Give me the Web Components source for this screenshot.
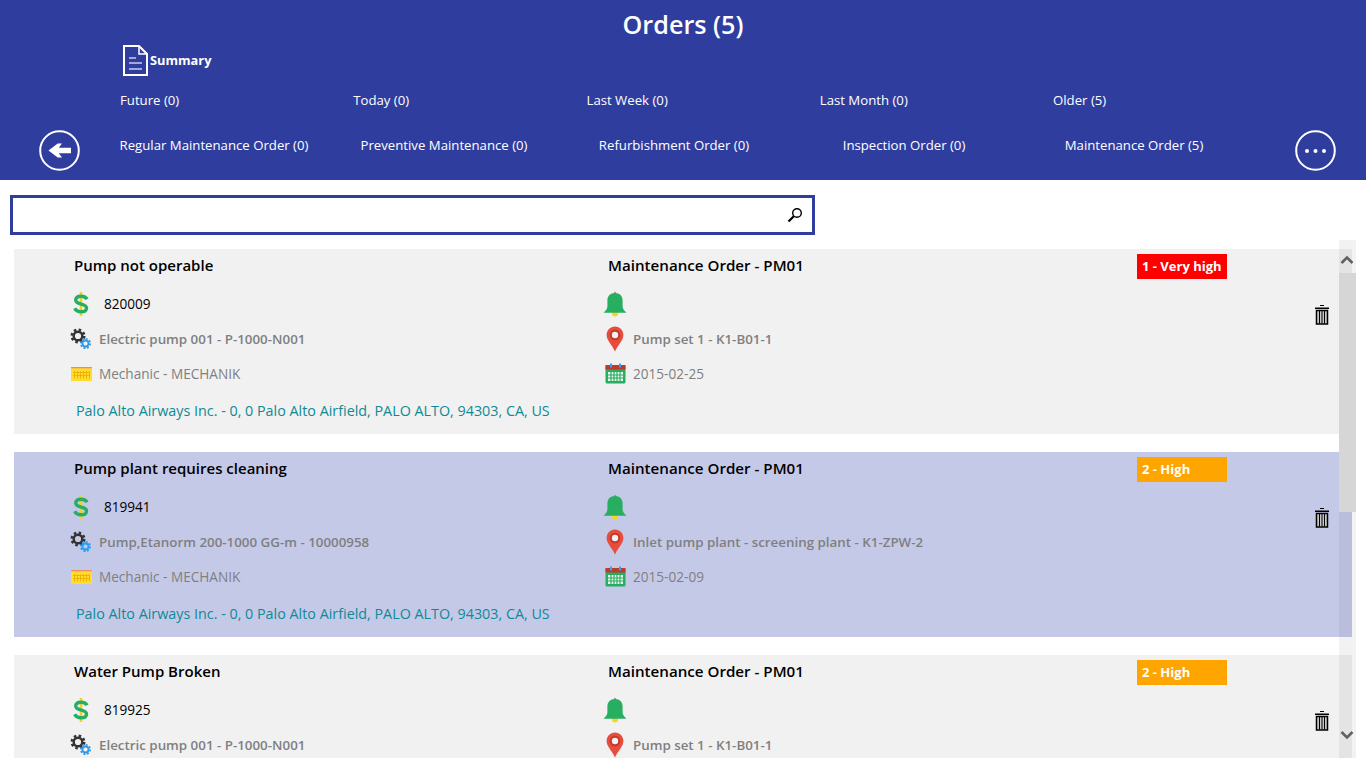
<!DOCTYPE html>
<html lang="en">
<head>
<meta charset="UTF-8">
<title>Orders</title>
<style>
  html, body { margin: 0; height: 768px; overflow: hidden; background: #fff; font-family: "Open Sans", "Noto Sans", sans-serif; }
</style>
</head>
<body>
  <orders-header>
    <span slot="title">Orders (5)</span>
    <span slot="summary">Summary</span>
    <span slot="dates">Future (0)</span>
    <span slot="dates">Today (0)</span>
    <span slot="dates">Last Week (0)</span>
    <span slot="dates">Last Month (0)</span>
    <span slot="dates">Older (5)</span>
    <span slot="types">Regular Maintenance Order (0)</span>
    <span slot="types">Preventive Maintenance (0)</span>
    <span slot="types">Refurbishment Order (0)</span>
    <span slot="types">Inspection Order (0)</span>
    <span slot="types">Maintenance Order (5)</span>
  </orders-header>
  <search-box></search-box>
  <order-list>
    <order-card priority="very-high">
      <span slot="title">Pump not operable</span>
      <span slot="type">Maintenance Order - PM01</span>
      <span slot="badge">1 - Very high</span>
      <span slot="number">820009</span>
      <span slot="equipment">Electric pump 001 - P-1000-N001</span>
      <span slot="location">Pump set 1 - K1-B01-1</span>
      <span slot="work">Mechanic - MECHANIK</span>
      <span slot="date">2015-02-25</span>
      <span slot="address">Palo Alto Airways Inc. - 0, 0 Palo Alto Airfield, PALO ALTO, 94303, CA, US</span>
    </order-card>
    <order-card priority="high" selected>
      <span slot="title">Pump plant requires cleaning</span>
      <span slot="type">Maintenance Order - PM01</span>
      <span slot="badge">2 - High</span>
      <span slot="number">819941</span>
      <span slot="equipment">Pump,Etanorm 200-1000 GG-m - 10000958</span>
      <span slot="location">Inlet pump plant - screening plant - K1-ZPW-2</span>
      <span slot="work">Mechanic - MECHANIK</span>
      <span slot="date">2015-02-09</span>
      <span slot="address">Palo Alto Airways Inc. - 0, 0 Palo Alto Airfield, PALO ALTO, 94303, CA, US</span>
    </order-card>
    <!-- third card runs past the bottom of the list, only its upper rows are in view -->
    <order-card priority="high">
      <span slot="title">Water Pump Broken</span>
      <span slot="type">Maintenance Order - PM01</span>
      <span slot="badge">2 - High</span>
      <span slot="number">819925</span>
      <span slot="equipment">Electric pump 001 - P-1000-N001</span>
      <span slot="location">Pump set 1 - K1-B01-1</span>
    </order-card>
  </order-list>

  <script>
    // Icons used by the cards and the header
    const ICONS = {
      dollar: `<svg width="16" height="24" viewBox="0 0 16 24">
        <rect x="6.700" y="0" width="2.600" height="24" fill="#f4cf2e"/>
        <path d="M14 7.200C13 5.200 11 4.200 8.200 4.200 4.800 4.200 2.700 5.700 2.700 8.100c0 5.300 10.800 2.700 10.800 7.800 0 2.500-2.300 3.900-5.500 3.900-3.100 0-5.200-1.200-6.300-3.500" fill="none" stroke="#27ae60" stroke-width="3.400"/>
      </svg>`,
      gears: `<svg width="22" height="22" viewBox="0 0 22 22">
        <circle cx="8" cy="8" r="6" fill="none" stroke="#333" stroke-width="3" stroke-dasharray="2.400 2.300"/>
        <circle cx="8" cy="8" r="4.300" fill="none" stroke="#333" stroke-width="2.400"/>
        <circle cx="15.500" cy="15.500" r="4.400" fill="none" stroke="#2e9bf0" stroke-width="2.200" stroke-dasharray="1.900 1.500"/>
        <circle cx="15.500" cy="15.500" r="3" fill="none" stroke="#2e9bf0" stroke-width="1.800"/>
      </svg>`,
      work: `<svg width="21" height="14" viewBox="0 0 21 14">
        <rect x="0" y="0" width="21" height="14" fill="#ffdc2e"/>
        <rect x="0" y="0" width="21" height="1.300" fill="#ee8a6a"/>
        <path d="M3.500 4v7.500M6.500 4v7.500M9.500 4v7.500M12.500 4v7.500M15.500 4v7.500M18.500 4v7.500M2 5.500h17M2 8.500h17" stroke="#f0b400" stroke-width="1" fill="none"/>
      </svg>`,
      bell: `<svg width="24" height="26" viewBox="0 0 24 26">
        <circle cx="12" cy="22.500" r="3" fill="#f5d327"/>
        <path d="M12 .5l1.800 2.500h-3.600z" fill="#8a8a8a"/>
        <path d="M12 2c-4.800 0-7.600 3-7.600 7.500v6c0 2.300-1.800 4-3.900 6.300h23c-2.100-2.300-3.900-4-3.900-6.300v-6C19.600 5 16.800 2 12 2z" fill="#27ae60"/>
      </svg>`,
      pin: `<svg width="18" height="26" viewBox="0 0 18 26">
        <path d="M9 .5C4.200.5.600 4.200.600 9c0 5.500 5.400 9.700 8.400 16.500 3-6.800 8.400-11 8.400-16.500C17.400 4.200 13.800.5 9 .5z" fill="#e74c3c"/>
        <circle cx="9" cy="9" r="5.200" fill="#c0392b"/>
        <circle cx="9" cy="9" r="3.200" fill="#f2f2f2"/>
      </svg>`,
      calendar: `<svg width="21" height="21" viewBox="0 0 21 21">
        <rect x="0.500" y="2" width="20" height="18.500" rx="1.500" fill="#27ae60"/>
        <rect x="0.500" y="2" width="20" height="4.500" fill="#c0392b"/>
        <rect x="5" y="0.500" width="2" height="4" fill="#3ea0e8"/>
        <rect x="14" y="0.500" width="2" height="4" fill="#3ea0e8"/>
        <path d="M3 9h15v9H3z" fill="#eafaf0"/>
        <path d="M6 8.500v10M9 8.500v10M12 8.500v10M15 8.500v10M3 12h15M3 15h15" stroke="#27ae60" stroke-width="1.200" fill="none"/>
      </svg>`,
      trash: `<svg width="16" height="20" viewBox="0 0 16 20">
        <rect x="6" y="0" width="4" height="1" fill="#000"/>
        <rect x="1" y="2.500" width="14" height="1.500" fill="#000"/>
        <path d="M2.500 5.500h11V19h-11z" fill="#c8c8c8" stroke="#000" stroke-width="1.500"/>
        <path d="M5.500 6v12.500M8 6v12.500M10.500 6v12.500" stroke="#000" stroke-width="1" fill="none"/>
      </svg>`
    };

    customElements.define('app-icon', class extends HTMLElement {
      connectedCallback() {
        const root = this.shadowRoot || this.attachShadow({ mode: 'open' });
        root.innerHTML = `
          <style>
            :host { display: flex; align-items: center; justify-content: center; width: 26px; height: 35px; flex: none; }
            svg { display: block; flex: none; }
          </style>
          ${ICONS[this.getAttribute('name')]}`;
      }
    });

    customElements.define('orders-header', class extends HTMLElement {
      constructor() {
        super();
        this.attachShadow({ mode: 'open' }).innerHTML = `
          <style>
            :host { display: block; height: 180px; background: #2f3e9e; color: #fff; font-size: 13.200px; box-sizing: border-box; }
            h1 { margin: 0; height: 42px; padding-top: 6px; box-sizing: border-box; font-size: 25.200px; line-height: 36px; font-weight: 600; text-align: center; }
            .summary { display: flex; align-items: center; gap: 2px; height: 36px; margin-left: 123px; font-weight: 700; font-size: 12.800px; }
            .dates { display: grid; grid-template-columns: repeat(5, 233.250px); height: 44px; align-items: center; margin-left: 120px; }
            .types { display: grid; grid-template-columns: 99px repeat(5, 230px) 1fr; height: 58px; align-items: center; text-align: center; }
            .round { display: block; margin-bottom: 2px; justify-self: start; }
            .back { margin-left: 39px; }
            .more { margin-left: 46px; }
            ::slotted([slot="types"]) { white-space: nowrap; padding-bottom: 12px; }
          </style>
          <h1><slot name="title"></slot></h1>
          <div class="summary">
            <svg width="25" height="31" viewBox="0 0 25 31">
              <path d="M1 1h15l8 8v21H1z" fill="none" stroke="#fff" stroke-width="2"/>
              <path d="M16 1v8h8" fill="none" stroke="#fff" stroke-width="1.500"/>
              <path d="M6 13h7M6 18h13M6 24h13" stroke="#c9cdea" stroke-width="1.500"/>
            </svg>
            <slot name="summary"></slot>
          </div>
          <div class="dates"><slot name="dates"></slot></div>
          <div class="types" id="types">
            <svg class="round back" width="41" height="41" viewBox="0 0 41 41">
              <circle cx="20.500" cy="20.500" r="19.300" fill="none" stroke="#fff" stroke-width="2"/>
              <path d="M32 17.800H19.800l3.200-4.300h-4.300L9.500 20.500l9.200 7h4.300l-3.200-4.300H32z" fill="#fff"/>
            </svg>
            <slot name="types" style="display:contents"></slot>
            <svg class="round more" width="41" height="41" viewBox="0 0 41 41">
              <circle cx="20.500" cy="20.500" r="19.300" fill="none" stroke="#fff" stroke-width="2"/>
              <circle cx="12" cy="21" r="2" fill="#fff"/><circle cx="20.500" cy="21" r="2" fill="#fff"/><circle cx="29" cy="21" r="2" fill="#fff"/>
            </svg>
          </div>`;
      }
    });

    customElements.define('search-box', class extends HTMLElement {
      constructor() {
        super();
        this.attachShadow({ mode: 'open' }).innerHTML = `
          <style>
            :host { display: flex; align-items: center; justify-content: flex-end; box-sizing: border-box; width: 805px; height: 40px; margin: 15px 0 5px 10px; padding-right: 9px; border: 3px solid #2f3e9e; }
            svg { display: block; }
          </style>
          <svg width="16" height="16" viewBox="0 0 16 16">
            <circle cx="10" cy="6" r="4.300" fill="none" stroke="#000" stroke-width="1.400"/>
            <path d="M6.800 9.200L1.500 14.500" stroke="#000" stroke-width="2.200"/>
          </svg>`;
      }
    });

    customElements.define('order-list', class extends HTMLElement {
      constructor() {
        super();
        this.attachShadow({ mode: 'open' }).innerHTML = `
          <style>
            :host { display: block; position: relative; height: 518px; overflow: hidden; }
            .items { display: flex; flex-direction: column; gap: 18px; padding: 9px 14px 0 14px; }
            .bar { position: absolute; left: 1339px; top: 0; width: 17px; height: 518px; background: rgba(0,0,0,.05); }
            .thumb { position: absolute; left: 0; top: 33px; width: 17px; height: 239px; background: #d6d6d6; }
            .bar svg { position: absolute; left: 1px; }
          </style>
          <div class="items"><slot></slot></div>
          <div class="bar">
            <svg style="top:15px" width="14" height="9" viewBox="0 0 14 9"><path d="M1.500 8L7 2.500 12.500 8" fill="none" stroke="#606060" stroke-width="2.500"/></svg>
            <div class="thumb"></div>
            <svg style="top:491px" width="14" height="9" viewBox="0 0 14 9"><path d="M1.500 1L7 6.500 12.500 1" fill="none" stroke="#606060" stroke-width="2.500"/></svg>
          </div>`;
      }
    });

    customElements.define('order-card', class extends HTMLElement {
      constructor() {
        super();
        this.attachShadow({ mode: 'open' }).innerHTML = `
          <style>
            :host { display: block; flex: none; box-sizing: border-box; width: 1338px; height: 185px; padding: 5px 0 0 58px; background: #f1f1f1; color: #7f7f7f; font-size: 13.600px; position: relative; }
            :host([selected]) { background: #c5c9e8; }
            .grid { display: grid; grid-template-columns: 532px 533px 90px; grid-template-rows: 32px repeat(3, 35px); }
            .title { padding-left: 2px; line-height: 22px; color: #000; font-size: 15px; font-weight: 600; white-space: nowrap; }
            .title.type { padding-left: 4px; font-size: 15.150px; }
            .badge { display: block; height: 25px; line-height: 25px; padding-left: 5px; color: #fff; font-size: 13px; font-weight: 700; box-sizing: border-box; background: #ffa500; }
            :host([priority="very-high"]) .badge { background: #ff0000; }
            .row { display: flex; align-items: center; white-space: nowrap; }
            .left app-icon { width: 18px; }
            .right app-icon { width: 22px; }
            .num { color: #000; margin-left: 14px; }
            .strong { font-weight: 600; font-size: 13.350px; }
            .left .text { margin-left: 9px; }
            .right .text { margin-left: 7px; }
            .address { padding: 9.500px 0 0 4px; font-size: 14.330px; color: #0e8a96; white-space: nowrap; }
            .trash { position: absolute; left: 1295px; top: 48px; }
            .spacer { grid-column: 3; grid-row: 2 / 5; }
          </style>
          <div class="grid">
            <div class="title"><slot name="title"></slot></div>
            <div class="title type"><slot name="type"></slot></div>
            <div class="badge"><slot name="badge"></slot></div>

            <div class="row left"><app-icon name="dollar"></app-icon><span class="num"><slot name="number"></slot></span></div>
            <div class="row right"><app-icon name="bell"></app-icon></div>
            <div class="spacer"></div>

            <div class="row left"><app-icon name="gears"></app-icon><span class="text strong"><slot name="equipment"></slot></span></div>
            <div class="row right"><app-icon name="pin"></app-icon><span class="text strong"><slot name="location"></slot></span></div>

            <div class="row left"><app-icon name="work"></app-icon><span class="text"><slot name="work"></slot></span></div>
            <div class="row right"><app-icon name="calendar"></app-icon><span class="text"><slot name="date"></slot></span></div>
          </div>
          <div class="address"><slot name="address"></slot></div>
          <app-icon class="trash" name="trash"></app-icon>`;
      }
    });
  </script>
</body>
</html>
